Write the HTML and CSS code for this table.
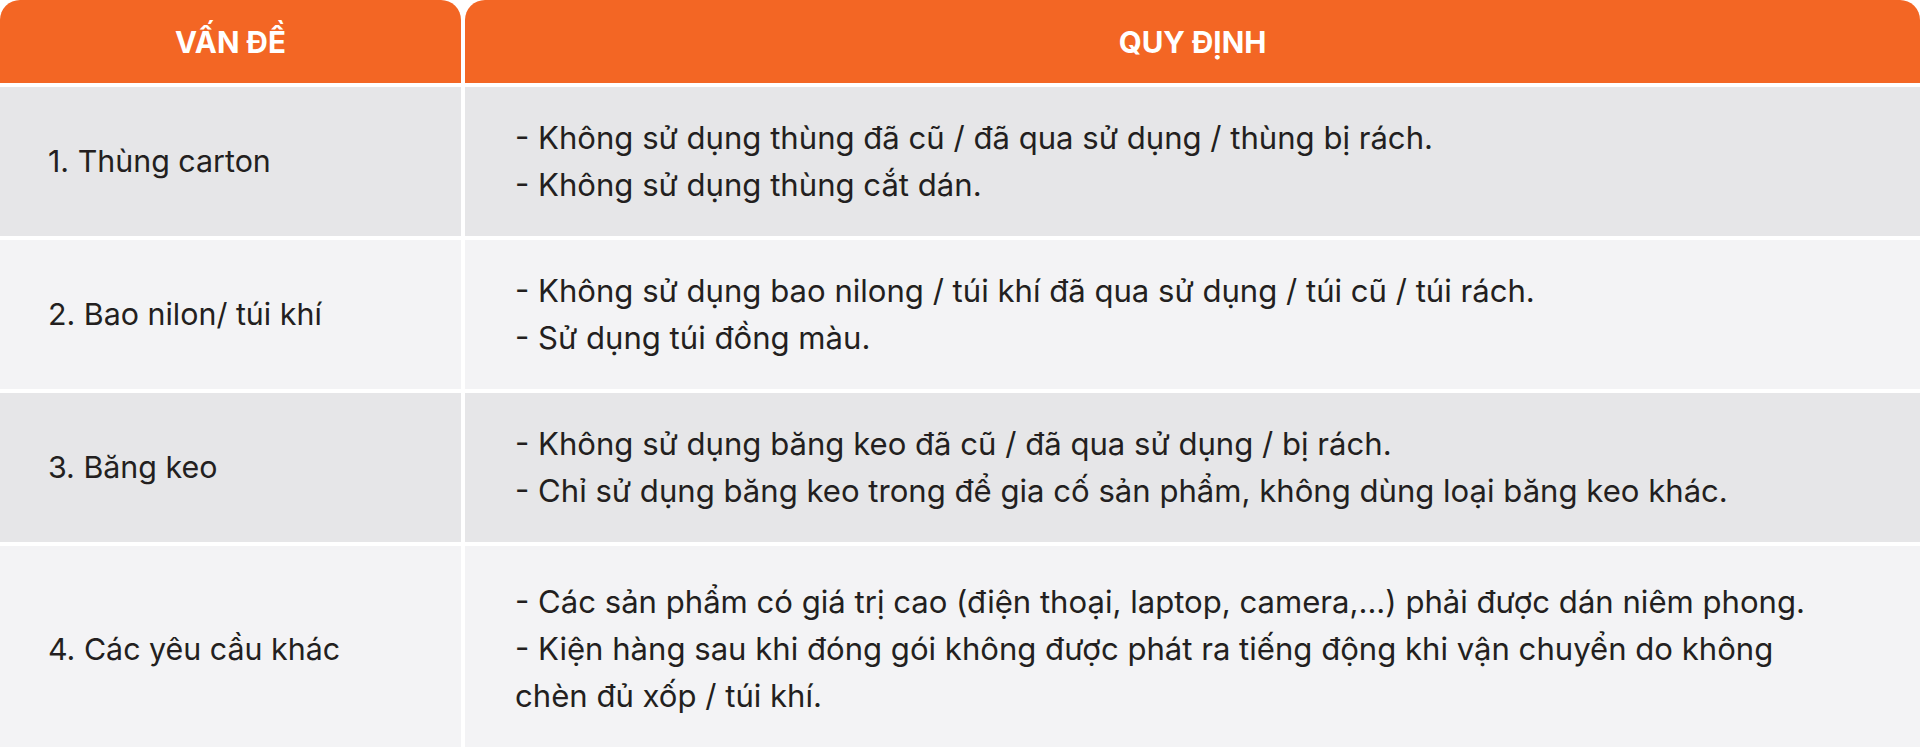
FILE: index.html
```html
<!DOCTYPE html>
<html lang="vi">
<head>
<meta charset="utf-8">
<title>Quy định đóng gói</title>
<link rel="stylesheet" href="styles.css">
</head>
<body>
<div class="table">
  <div class="th">VẤN ĐỀ</div>
  <div class="th">QUY ĐỊNH</div>

  <div class="td issue row-a">1. Thùng carton</div>
  <div class="td rule row-a">
    <p>- Không sử dụng thùng đã cũ / đã qua sử dụng / thùng bị rách.</p>
    <p>- Không sử dụng thùng cắt dán.</p>
  </div>

  <div class="td issue row-b">2. Bao nilon/ túi khí</div>
  <div class="td rule row-b">
    <p>- Không sử dụng bao nilong / túi khí đã qua sử dụng / túi cũ / túi rách.</p>
    <p>- Sử dụng túi đồng màu.</p>
  </div>

  <div class="td issue row-a">3. Băng keo</div>
  <div class="td rule row-a">
    <p>- Không sử dụng băng keo đã cũ / đã qua sử dụng / bị rách.</p>
    <p>- Chỉ sử dụng băng keo trong để gia cố sản phẩm, không dùng loại băng keo khác.</p>
  </div>

  <div class="td issue row-b">4. Các yêu cầu khác</div>
  <div class="td rule row-b">
    <p>- Các sản phẩm có giá trị cao (điện thoại, laptop, camera,...) phải được dán niêm phong.</p>
    <p>- Kiện hàng sau khi đóng gói không được phát ra tiếng động khi vận chuyển do không<br>chèn đủ xốp / túi khí.</p>
  </div>
</div>
</body>
</html>
```
FILE: styles.css
```css
html, body {
  margin: 0;
  padding: 0;
  background: #ffffff;
}

body {
  font-family: "Inter", "Noto Sans", sans-serif;
  color: #231f20;
}

.table {
  display: grid;
  grid-template-columns: 461px 1fr;
  grid-template-rows: 83px 149px 149px 149px 206px;
  column-gap: 4px;
  row-gap: 4px;
}

.th {
  background: #f36624;
  color: #ffffff;
  font-weight: 700;
  font-size: 29.6px;
  border-radius: 20px 20px 0 0;
  display: flex;
  align-items: center;
  justify-content: center;
  padding-top: 1px;
}

.td {
  display: flex;
  flex-direction: column;
  justify-content: center;
  font-size: 30.6px;
  line-height: 47px;
  font-weight: 400;
}

.issue {
  padding: 0 40px 0 48px;
  font-size: 30.4px;
}

.rule {
  padding: 0 40px 0 50px;
  font-size: 31.1px;
}

.td p {
  margin: 0;
  white-space: nowrap;
}

.row-a {
  background: #e6e6e8;
}

.row-b {
  background: #f3f3f5;
}
```
